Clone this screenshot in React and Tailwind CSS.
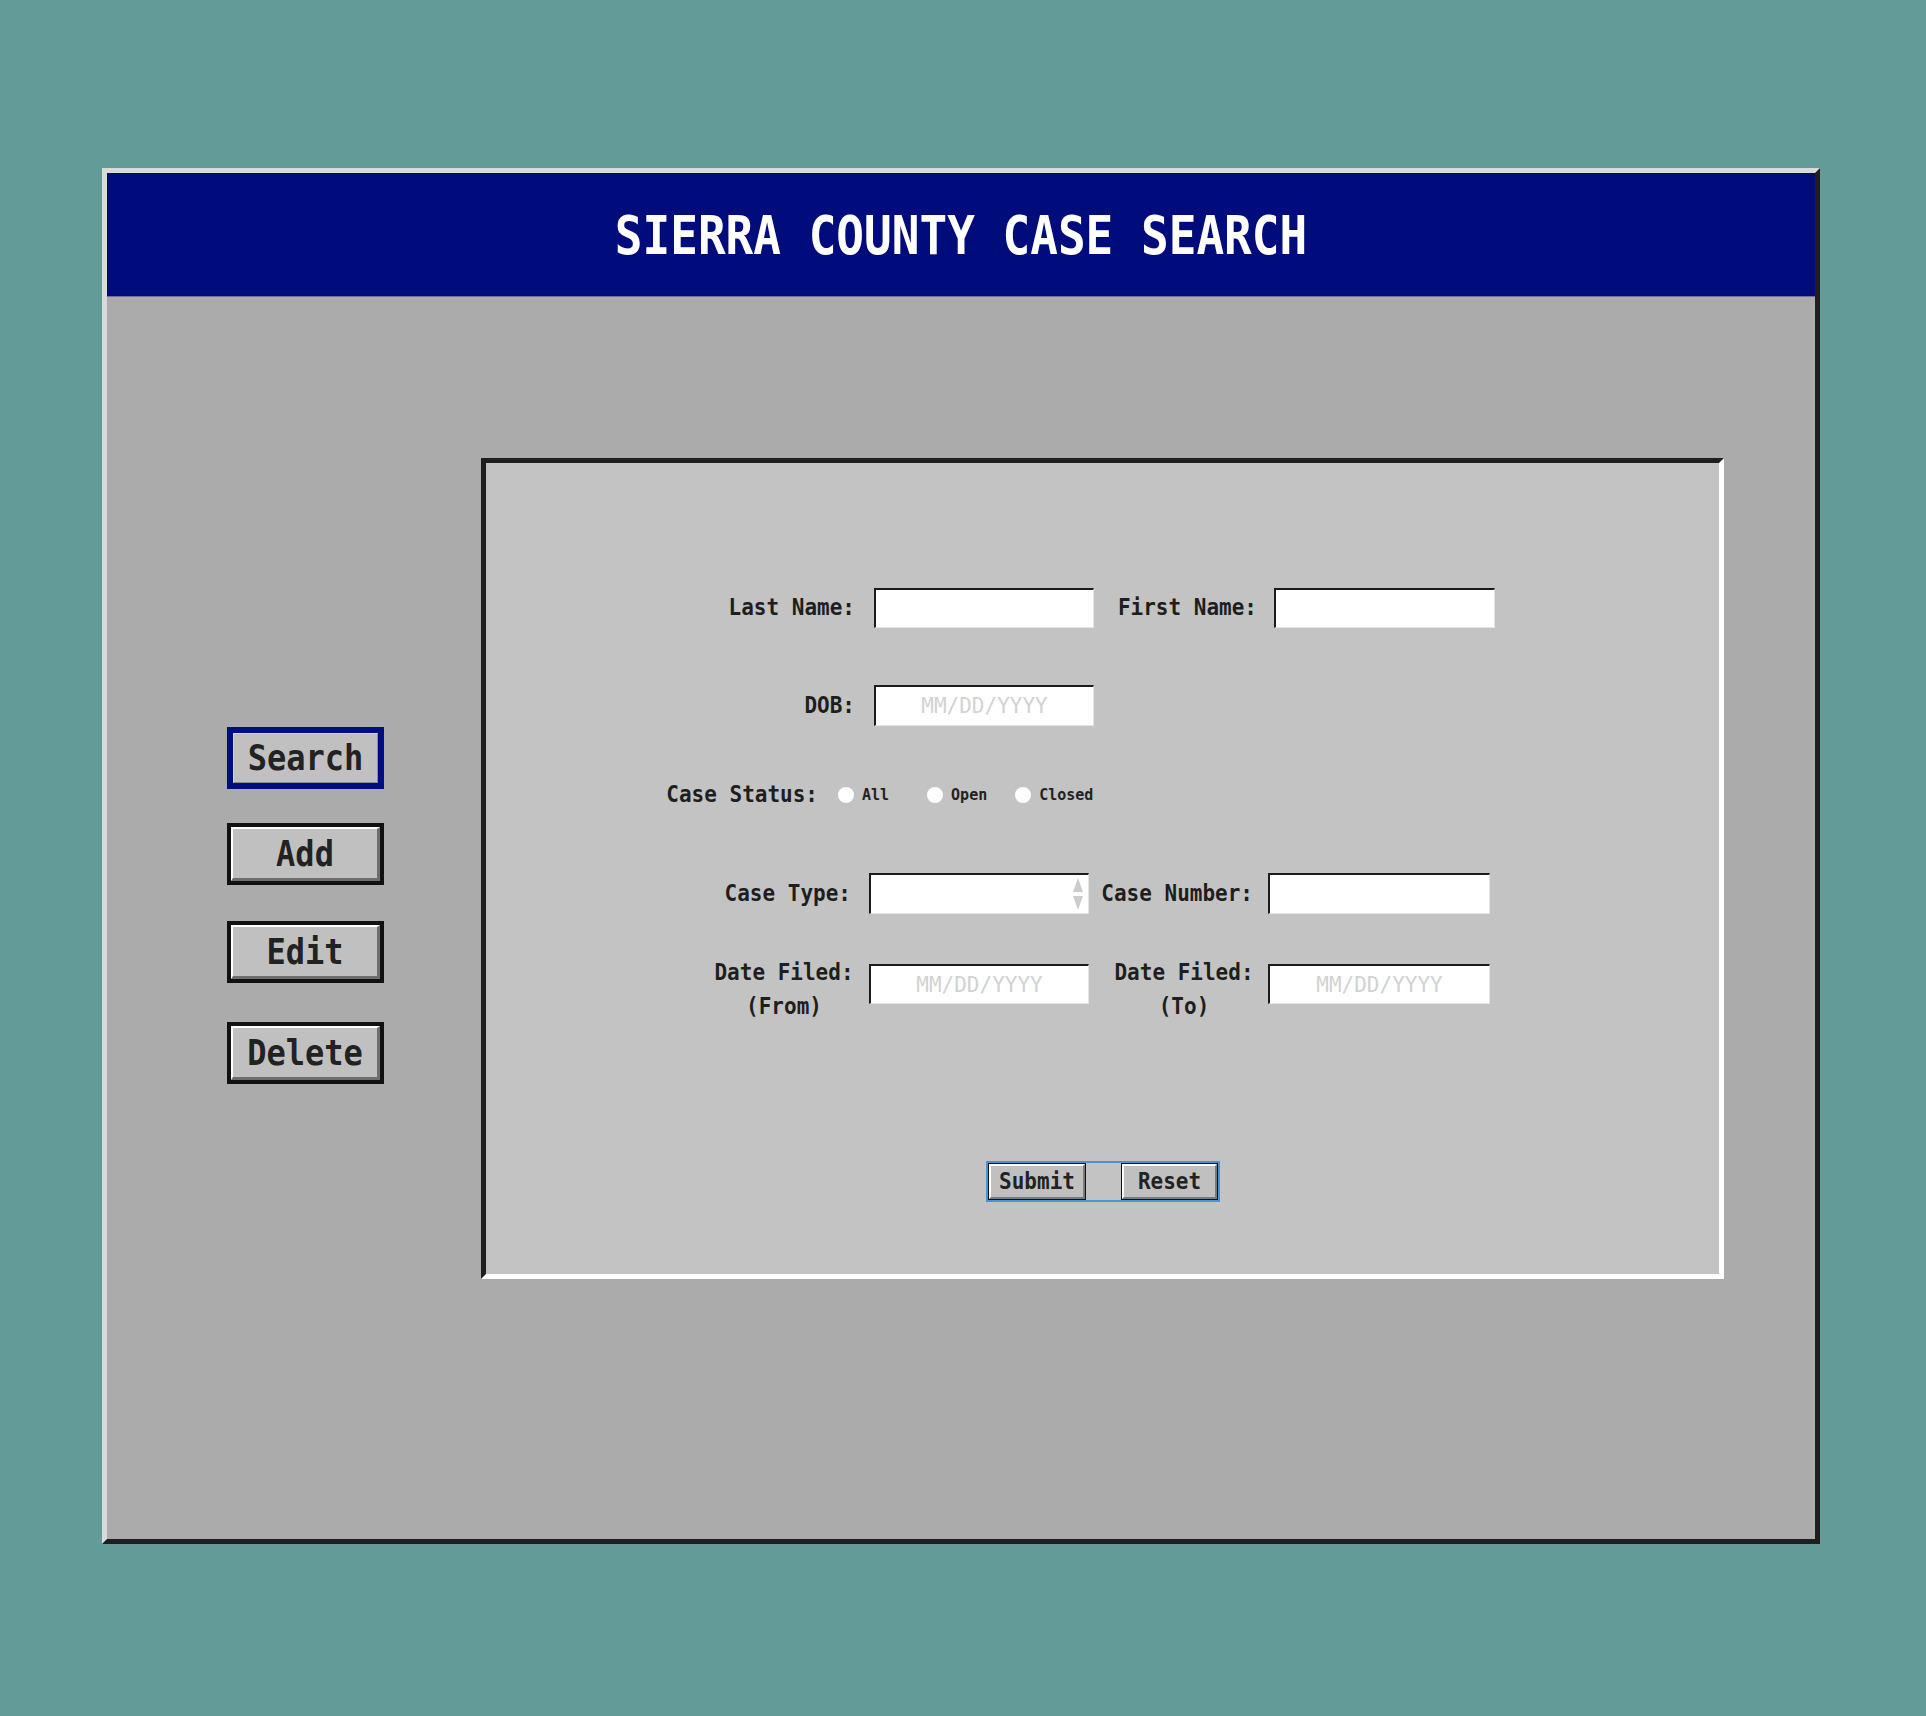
import React from "react";

function SideButton({ label, active }) {
  if (active) {
    return (
      <button className="h-[62px] w-[157px] border-[6px] border-[#000e80] bg-[#c0c0c0]">
        <div className="h-full w-full border border-t-[#d6d6d6] border-l-[#d6d6d6] border-r-[#8c8c8c] border-b-[#8c8c8c] flex items-center justify-center">
          <span className="inline-block scale-y-[1.12] text-[32px] leading-none font-bold text-[#222]">{label}</span>
        </div>
      </button>
    );
  }
  return (
    <button className="h-[62px] w-[157px] border-4 border-[#111] bg-[#c0c0c0]">
      <div className="h-full w-full border-t-2 border-l-2 border-r-[3px] border-b-[3px] border-t-white border-l-white border-r-[#6e6e6e] border-b-[#6e6e6e] flex items-center justify-center">
        <span className="inline-block scale-y-[1.12] text-[32px] leading-none font-bold text-[#222]">{label}</span>
      </div>
    </button>
  );
}

function Field({ placeholder, className }) {
  return (
    <input
      placeholder={placeholder}
      className={
        "h-[40px] bg-white border-t-2 border-l-2 border-r border-b border-t-[#1c1c1c] border-l-[#1c1c1c] border-r-[#e4e4e4] border-b-[#e4e4e4] text-center text-[21px] placeholder:text-[#d2d2d2] outline-none " +
        className
      }
    />
  );
}

function Label({ children, className }) {
  return (
    <div className={"whitespace-nowrap text-[21px] font-bold text-[#1e1e1e] " + className}>
      <span className="inline-block scale-y-[1.1]">{children}</span>
    </div>
  );
}

function Radio({ label, className }) {
  return (
    <div className={"flex items-center " + className}>
      <span className="h-[16px] w-[16px] rounded-full bg-white" />
      <span className="ml-[8px] text-[15px] font-bold text-[#222] inline-block scale-y-[1.1]">{label}</span>
    </div>
  );
}

function FormButton({ label, className }) {
  return (
    <button className={"h-[37px] border border-[#111] bg-[#c0c0c0] " + className}>
      <div className="h-full w-full border-t-2 border-l-2 border-r-2 border-b-2 border-t-white border-l-white border-r-[#7a7a7a] border-b-[#7a7a7a] flex items-center justify-center">
        <span className="inline-block scale-y-[1.1] text-[21px] leading-none font-bold text-[#222]">{label}</span>
      </div>
    </button>
  );
}

export default function App() {
  return (
    <div className="h-[1716px] w-full bg-[#629b97] pt-[168px] pl-[102px] font-['DejaVu_Sans_Mono',monospace]">
      {/* Window */}
      <div className="w-[1718px] h-[1376px] border-[5px] border-t-[#dadada] border-l-[#dadada] border-r-[#1f1f1f] border-b-[#1f1f1f] flex flex-col">
        {/* Header */}
        <div className="h-[124px] bg-[#000c7b] border-b border-b-[#6f6fa3] flex items-center justify-center">
          <span className="inline-block scale-y-[1.16] text-[46px] leading-none font-bold text-white">
            SIERRA COUNTY CASE SEARCH
          </span>
        </div>

        {/* Body */}
        <div className="flex-1 bg-[#ababab] flex items-start pt-[161px] pl-[120px]">
          {/* Side buttons */}
          <div className="mt-[269px] flex w-[157px] flex-col">
            <SideButton label="Search" active />
            <div className="mt-[34px]">
              <SideButton label="Add" />
            </div>
            <div className="mt-[36px]">
              <SideButton label="Edit" />
            </div>
            <div className="mt-[39px]">
              <SideButton label="Delete" />
            </div>
          </div>

          {/* Form panel */}
          <div className="ml-[97px] w-[1243px] h-[821px] border-[5px] border-t-[#1f1f1f] border-l-[#1f1f1f] border-r-white border-b-white bg-[#c3c3c3] flex flex-col">
            <div className="mt-[125px] flex h-[40px] items-center">
              <Label className="w-[369px] text-right">Last Name:</Label>
              <Field className="ml-[19px] w-[220px]" />
              <Label className="w-[163px] text-right">First Name:</Label>
              <Field className="ml-[17px] w-[221px]" />
            </div>

            <div className="mt-[57px] flex h-[41px] items-center">
              <Label className="w-[369px] text-right">DOB:</Label>
              <Field className="ml-[19px] w-[220px] h-[41px]" placeholder="MM/DD/YYYY" />
            </div>

            <div className="mt-[57px] flex h-[24px] items-center">
              <Label className="w-[332px] text-right">Case Status:</Label>
              <Radio label="All" className="ml-[20px]" />
              <Radio label="Open" className="ml-[38px]" />
              <Radio label="Closed" className="ml-[28px]" />
            </div>

            <div className="mt-[66px] flex h-[41px] items-center">
              <Label className="w-[365px] text-right">Case Type:</Label>
              <div className="ml-[18px] h-[41px] w-[220px] bg-white border-t-2 border-l-2 border-r border-b border-t-[#1c1c1c] border-l-[#1c1c1c] border-r-[#e4e4e4] border-b-[#e4e4e4] flex items-center justify-end pr-[4px]">
                <svg width="12" height="34" viewBox="0 0 12 34">
                  <path d="M6 1 L11 15 L1 15 Z" fill="#cccccc" />
                  <path d="M1 19 L11 19 L6 33 Z" fill="#cccccc" />
                </svg>
              </div>
              <Label className="w-[164px] text-right">Case Number:</Label>
              <Field className="ml-[15px] w-[222px] h-[41px]" />
            </div>

            <div className="mt-[45px] flex items-start pl-[227px]">
              <Label className="w-[142px] text-center leading-[31px]">
                Date Filed:
                <br />
                (From)
              </Label>
              <Field className="ml-[14px] mt-[5px] w-[220px]" placeholder="MM/DD/YYYY" />
              <Label className="ml-[24px] w-[142px] text-center leading-[31px]">
                Date Filed:
                <br />
                (To)
              </Label>
              <Field className="ml-[13px] mt-[5px] w-[222px]" placeholder="MM/DD/YYYY" />
            </div>

            <div className="mt-[140px] flex pl-[500px]">
              <div className="flex gap-[35px] border-2 border-[#4f8fd6]">
                <FormButton label="Submit" className="w-[98px]" />
                <FormButton label="Reset" className="w-[97px]" />
              </div>
            </div>
          </div>
        </div>
      </div>
    </div>
  );
}
